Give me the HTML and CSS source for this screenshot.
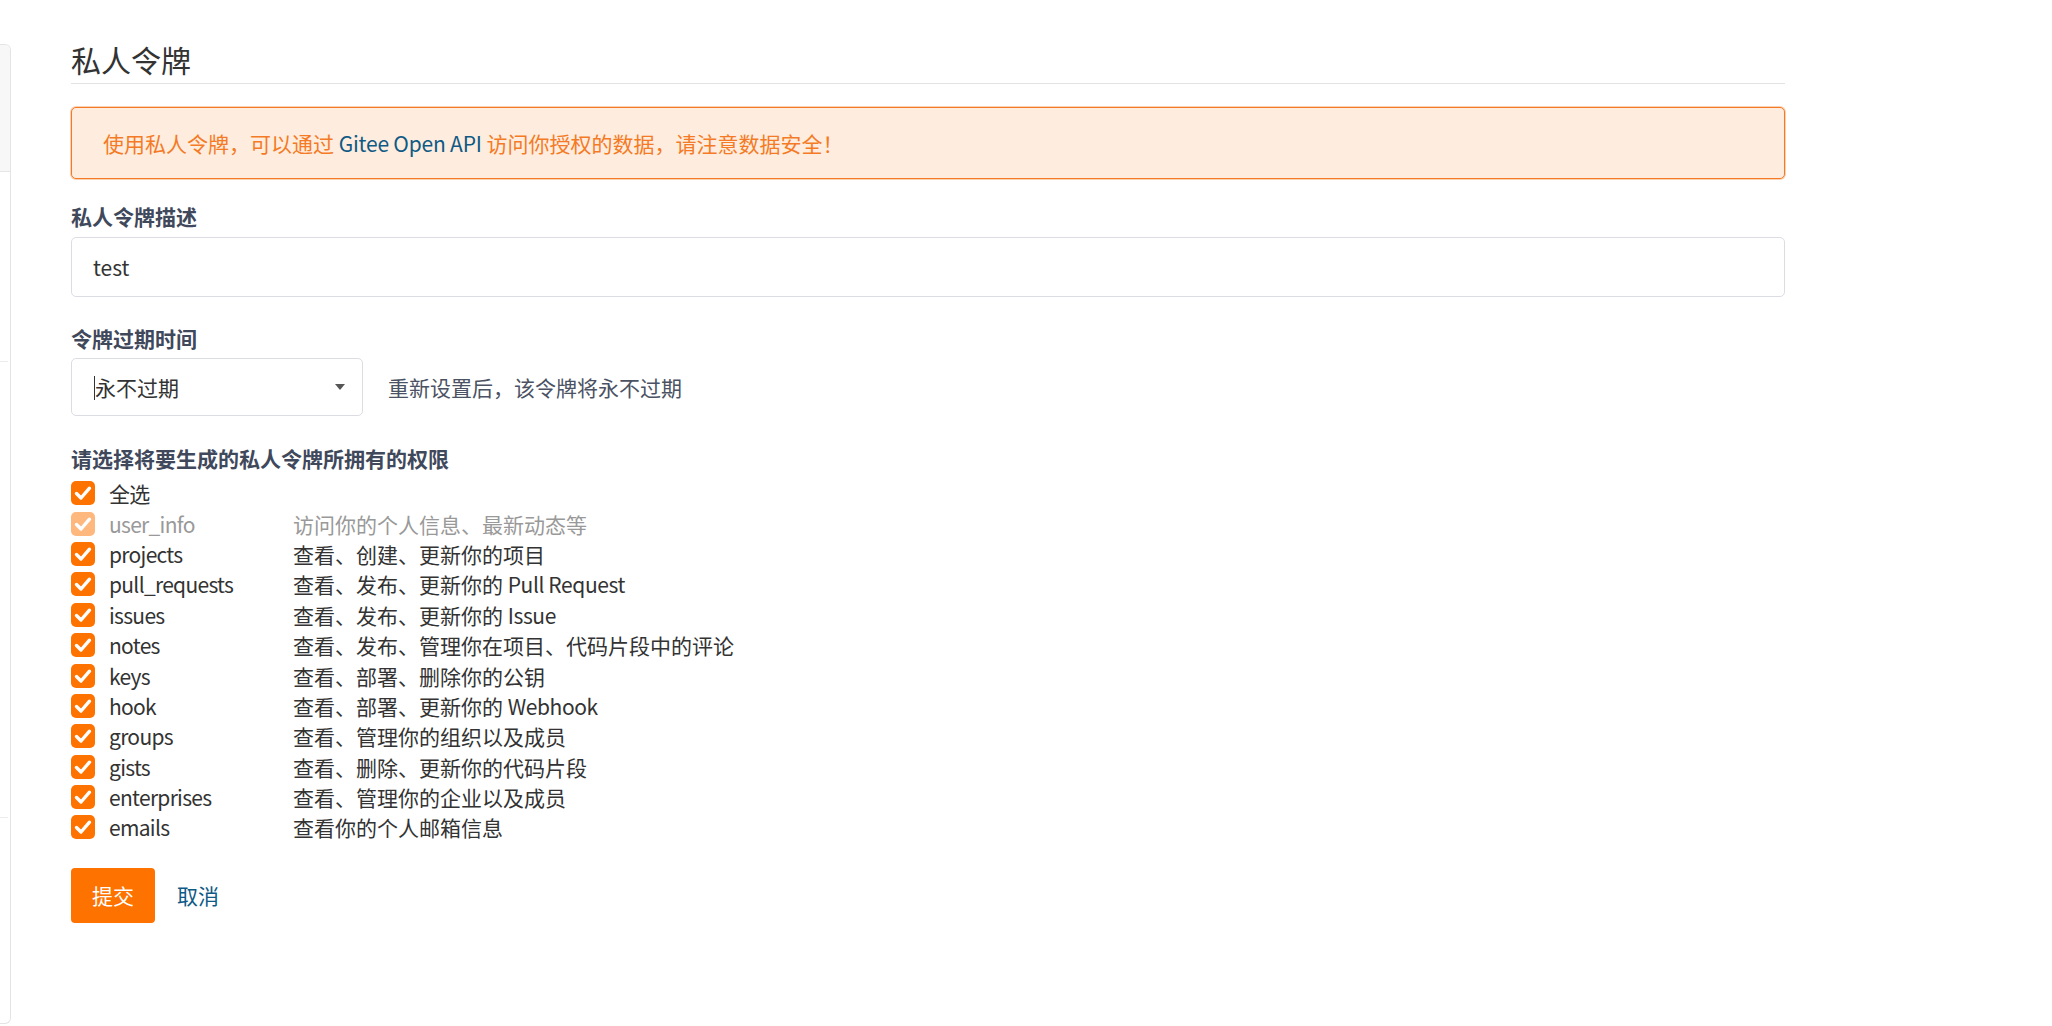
FILE: index.html
```html
<!DOCTYPE html>
<html lang="zh-CN">
<head>
<meta charset="utf-8">
<title>私人令牌</title>
<link rel="stylesheet" href="styles.css">
</head>
<body>
<div class="page">
  <aside class="sidebar">
    <div class="side-block side-head"></div>
    <div class="side-block side-mid"></div>
    <div class="side-block side-low"></div>
    <div class="side-block side-rest"></div>
  </aside>

  <main class="content">
    <h2 class="page-title">私人令牌</h2>

    <div class="alert">
      使用私人令牌，可以通过 <a class="alert-link" href="#">Gitee Open API</a> 访问你授权的数据，请注意数据安全！
    </div>

    <form class="token-form">
      <div class="field">
        <label class="field-label">私人令牌描述</label>
        <div class="text-input">test</div>
      </div>

      <div class="field field-expire">
        <label class="field-label">令牌过期时间</label>
        <div class="expire-row">
          <div class="select">
            <span class="text-caret"></span>
            <span class="select-value">永不过期</span>
            <span class="select-arrow"></span>
          </div>
          <span class="help-text">重新设置后，该令牌将永不过期</span>
        </div>
      </div>

      <div class="field field-scopes">
        <label class="field-label">请选择将要生成的私人令牌所拥有的权限</label>
        <ul class="scope-list">
          <li class="scope">
            <span class="check"><svg viewBox="0 0 24 24"><path d="M5.5 12.5 L10 17 L18.5 7.2"/></svg></span>
            <span class="scope-name">全选</span>
          </li>
          <li class="scope scope-disabled">
            <span class="check"><svg viewBox="0 0 24 24"><path d="M5.5 12.5 L10 17 L18.5 7.2"/></svg></span>
            <span class="scope-name">user_info</span>
            <span class="scope-desc">访问你的个人信息、最新动态等</span>
          </li>
          <li class="scope">
            <span class="check"><svg viewBox="0 0 24 24"><path d="M5.5 12.5 L10 17 L18.5 7.2"/></svg></span>
            <span class="scope-name">projects</span>
            <span class="scope-desc">查看、创建、更新你的项目</span>
          </li>
          <li class="scope">
            <span class="check"><svg viewBox="0 0 24 24"><path d="M5.5 12.5 L10 17 L18.5 7.2"/></svg></span>
            <span class="scope-name">pull_requests</span>
            <span class="scope-desc">查看、发布、更新你的 <span class="latin">Pull Request</span></span>
          </li>
          <li class="scope">
            <span class="check"><svg viewBox="0 0 24 24"><path d="M5.5 12.5 L10 17 L18.5 7.2"/></svg></span>
            <span class="scope-name">issues</span>
            <span class="scope-desc">查看、发布、更新你的 <span class="latin">Issue</span></span>
          </li>
          <li class="scope">
            <span class="check"><svg viewBox="0 0 24 24"><path d="M5.5 12.5 L10 17 L18.5 7.2"/></svg></span>
            <span class="scope-name">notes</span>
            <span class="scope-desc">查看、发布、管理你在项目、代码片段中的评论</span>
          </li>
          <li class="scope">
            <span class="check"><svg viewBox="0 0 24 24"><path d="M5.5 12.5 L10 17 L18.5 7.2"/></svg></span>
            <span class="scope-name">keys</span>
            <span class="scope-desc">查看、部署、删除你的公钥</span>
          </li>
          <li class="scope">
            <span class="check"><svg viewBox="0 0 24 24"><path d="M5.5 12.5 L10 17 L18.5 7.2"/></svg></span>
            <span class="scope-name">hook</span>
            <span class="scope-desc">查看、部署、更新你的 <span class="latin">Webhook</span></span>
          </li>
          <li class="scope">
            <span class="check"><svg viewBox="0 0 24 24"><path d="M5.5 12.5 L10 17 L18.5 7.2"/></svg></span>
            <span class="scope-name">groups</span>
            <span class="scope-desc">查看、管理你的组织以及成员</span>
          </li>
          <li class="scope">
            <span class="check"><svg viewBox="0 0 24 24"><path d="M5.5 12.5 L10 17 L18.5 7.2"/></svg></span>
            <span class="scope-name">gists</span>
            <span class="scope-desc">查看、删除、更新你的代码片段</span>
          </li>
          <li class="scope">
            <span class="check"><svg viewBox="0 0 24 24"><path d="M5.5 12.5 L10 17 L18.5 7.2"/></svg></span>
            <span class="scope-name">enterprises</span>
            <span class="scope-desc">查看、管理你的企业以及成员</span>
          </li>
          <li class="scope">
            <span class="check"><svg viewBox="0 0 24 24"><path d="M5.5 12.5 L10 17 L18.5 7.2"/></svg></span>
            <span class="scope-name">emails</span>
            <span class="scope-desc">查看你的个人邮箱信息</span>
          </li>
        </ul>
      </div>

      <div class="actions">
        <button class="btn-submit" type="button">提交</button>
        <a class="btn-cancel" href="#">取消</a>
      </div>
    </form>
  </main>
</div>
</body>
</html>
```

FILE: styles.css
```css
* {
  box-sizing: border-box;
}

html, body {
  margin: 0;
  padding: 0;
  background: #fff;
}

body {
  font-family: "Noto Sans CJK SC", "Noto Sans", sans-serif;
  font-size: 21px;
  line-height: 30px;
  color: #333;
}

.page {
  display: flex;
  align-items: flex-start;
  height: 1026px;
  overflow: hidden;
}

/* left navigation panel, only its right edge is in view */
.sidebar {
  flex: 0 0 11px;
  margin-top: 44px;
  height: 980px;
  border: 1px solid #e4e4e4;
  border-left: none;
  border-radius: 0 6px 6px 0;
  display: flex;
  flex-direction: column;
  overflow: hidden;
}

.side-head {
  height: 127px;
  background: #f7f7f7;
  border-bottom: 1px solid #e6e6e6;
}

.side-mid {
  height: 190px;
  margin-right: 2px;
  border-bottom: 1px solid #ececec;
}

.side-low {
  height: 456px;
  margin-right: 2px;
  border-bottom: 1px solid #ececec;
}

.side-rest {
  flex: 1;
}

.content {
  margin-left: 60px;
  width: 1714px;
}

.page-title {
  margin: 39px 0 0;
  font-size: 30px;
  line-height: 40px;
  font-weight: 400;
  color: #333;
  padding-bottom: 4px;
  border-bottom: 1px solid #e3e3e3;
}

.alert {
  margin-top: 23px;
  height: 72px;
  padding: 20px 31px;
  background: #feedde;
  border: 1px solid #f47a26;
  border-radius: 5px;
  color: #f47a26;
  box-shadow: 0 0 0 1px rgba(244, 122, 38, 0.35);
}

.alert-link {
  color: #0e5a85;
  text-decoration: none;
  letter-spacing: -0.2px;
}

.token-form {
  margin: 0;
}

.field {
  margin-top: 22px;
}

.field-label {
  display: block;
  font-weight: 700;
  color: #40485b;
}

.text-input {
  margin-top: 6px;
  height: 60px;
  border: 1px solid #dcdde3;
  border-radius: 5px;
  padding: 14px 21px;
  color: #333;
}

.field-expire {
  margin-top: 26px;
}

.expire-row {
  margin-top: 5px;
  display: flex;
  align-items: center;
  gap: 25px;
}

.select {
  width: 292px;
  height: 58px;
  border: 1px solid #dcdde3;
  border-radius: 5px;
  padding: 0 17px 0 22px;
  display: flex;
  align-items: center;
}

.text-caret {
  width: 1px;
  height: 24px;
  background: #333;
  margin-top: 2px;
}

.select-value {
  flex: 1;
  color: #333;
}

.select-arrow {
  width: 0;
  height: 0;
  border-left: 5px solid transparent;
  border-right: 5px solid transparent;
  border-top: 6px solid #555;
}

.help-text {
  color: #4b5263;
}

.field-scopes {
  margin-top: 27px;
}

.scope-list {
  list-style: none;
  margin: 5px 0 0;
  padding: 0;
}

.scope {
  display: flex;
  align-items: center;
  height: 30.4px;
}

.check {
  flex: 0 0 24px;
  width: 24px;
  height: 24px;
  border-radius: 5px;
  background: #fe7300;
  display: flex;
}

.check svg {
  width: 24px;
  height: 24px;
  fill: none;
  stroke: #fff;
  stroke-width: 3.4;
  stroke-linecap: round;
  stroke-linejoin: round;
}

.scope-name {
  margin-left: 14px;
  width: 184px;
  color: #333;
  letter-spacing: -0.7px;
}

.scope-desc {
  color: #333;
}

.latin {
  letter-spacing: -0.4px;
}

.scope-disabled .check {
  opacity: 0.5;
}

.scope-disabled .scope-name,
.scope-disabled .scope-desc {
  color: #999;
}

.actions {
  margin-top: 25px;
  display: flex;
  align-items: center;
  gap: 22px;
}

.btn-submit {
  width: 84px;
  height: 55px;
  border: none;
  border-radius: 4px;
  background: #fe7300;
  color: #fff;
  font-family: inherit;
  font-size: 21px;
  padding: 0;
}

.btn-cancel {
  color: #0e5a85;
  text-decoration: none;
}
```
